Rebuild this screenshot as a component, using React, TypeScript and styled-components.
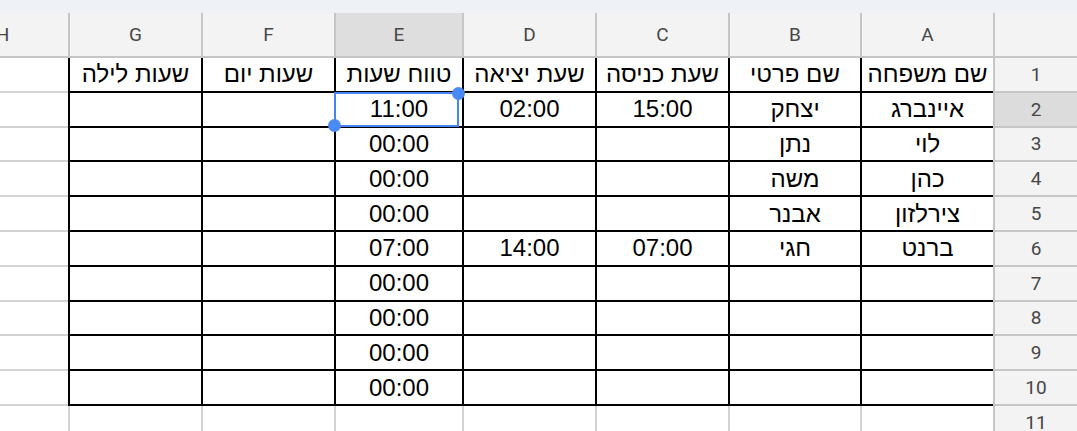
import React from "react";
import styled, { createGlobalStyle, css } from "styled-components";

const GlobalStyle = createGlobalStyle`
  html, body { margin: 0; padding: 0; background: #ffffff; overflow: hidden; }
  * { box-sizing: border-box; }
`;

const Page = styled.div`
  width: 1077px;
  height: 431px;
  display: flex;
  flex-direction: column;
  overflow: hidden;
  background: #ffffff;
`;

const TopStrip = styled.div`
  height: 13px;
  flex: none;
  background: #eef2f6;
`;

const SheetViewport = styled.div`
  flex: 1;
  overflow: hidden;
`;

const Grid = styled.div`
  direction: rtl;
  display: grid;
  justify-content: start;
  grid-template-columns: 84px 133px 132px 133px 133px 128px 133px 133px 133px;
  grid-template-rows: 45px repeat(11, 34.8px);
`;

const GRAY_HEADER = "#c6c6c6";
const GRAY_GRID = "#d3d3d3";

const HeaderBase = css`
  display: flex;
  align-items: center;
  justify-content: center;
  font-family: Roboto, "Liberation Sans", sans-serif;
  font-size: 19px;
  color: #474747;
  border-left: 2px solid ${GRAY_HEADER};
`;

const Corner = styled.div`
  ${HeaderBase};
  background: #f3f3f3;
  border-bottom: 2px solid ${GRAY_HEADER};
`;

const ColHeader = styled.div<{ $selected?: boolean }>`
  ${HeaderBase};
  background: ${(p) => (p.$selected ? "#dedede" : "#f3f3f3")};
  border-bottom: 2px solid ${GRAY_HEADER};
`;

const RowHeader = styled.div<{ $selected?: boolean }>`
  ${HeaderBase};
  background: ${(p) => (p.$selected ? "#dcdcdc" : "#f3f3f3")};
  border-bottom: 2px solid ${GRAY_HEADER};
`;

const Cell = styled.div<{ $boxed?: boolean }>`
  position: relative;
  display: flex;
  align-items: center;
  justify-content: center;
  overflow: visible;
  white-space: nowrap;
  font-family: "Liberation Sans", Arial, sans-serif;
  font-size: 24px;
  color: #000000;
  border-left: 2px solid ${(p) => (p.$boxed ? "#000000" : GRAY_GRID)};
  border-bottom: 2px solid ${(p) => (p.$boxed ? "#000000" : GRAY_GRID)};
`;

const Selection = styled.div`
  position: absolute;
  left: -2px;
  top: -1px;
  width: 125px;
  height: 35px;
  border: 2px solid #4285f4;
  z-index: 2;
  pointer-events: none;
`;

const Handle = styled.span<{ $corner: "tr" | "bl" }>`
  position: absolute;
  width: 13px;
  height: 13px;
  border-radius: 50%;
  background: #4a8af4;
  ${(p) =>
    p.$corner === "tr"
      ? css`
          right: -8px;
          top: -7px;
        `
      : css`
          left: -8px;
          bottom: -7px;
        `}
`;

const COLS = ["A", "B", "C", "D", "E", "F", "G", "H"];

const data: string[][] = [
  ["שם משפחה", "שם פרטי", "שעת כניסה", "שעת יציאה", "טווח שעות", "שעות יום", "שעות לילה", ""],
  ["איינברג", "יצחק", "15:00", "02:00", "11:00", "", "", ""],
  ["לוי", "נתן", "", "", "00:00", "", "", ""],
  ["כהן", "משה", "", "", "00:00", "", "", ""],
  ["צירלזון", "אבנר", "", "", "00:00", "", "", ""],
  ["ברנט", "חגי", "07:00", "14:00", "07:00", "", "", ""],
  ["", "", "", "", "00:00", "", "", ""],
  ["", "", "", "", "00:00", "", "", ""],
  ["", "", "", "", "00:00", "", "", ""],
  ["", "", "", "", "00:00", "", "", ""],
  ["", "", "", "", "", "", "", ""],
];

export default function App() {
  return (
    <>
      <GlobalStyle />
      <Page>
        <TopStrip />
        <SheetViewport>
          <Grid>
            <Corner />
            {COLS.map((c) => (
              <ColHeader key={c} $selected={c === "E"}>
                {c}
              </ColHeader>
            ))}
            {data.map((row, r) => (
              <React.Fragment key={r}>
                <RowHeader $selected={r === 1}>{r + 1}</RowHeader>
                {row.map((val, c) => {
                  const boxed = r < 10 && c < 7;
                  const selected = r === 1 && c === 4;
                  return (
                    <Cell key={c} $boxed={boxed}>
                      {val}
                      {selected && (
                        <Selection>
                          <Handle $corner="tr" />
                          <Handle $corner="bl" />
                        </Selection>
                      )}
                    </Cell>
                  );
                })}
              </React.Fragment>
            ))}
          </Grid>
        </SheetViewport>
      </Page>
    </>
  );
}
